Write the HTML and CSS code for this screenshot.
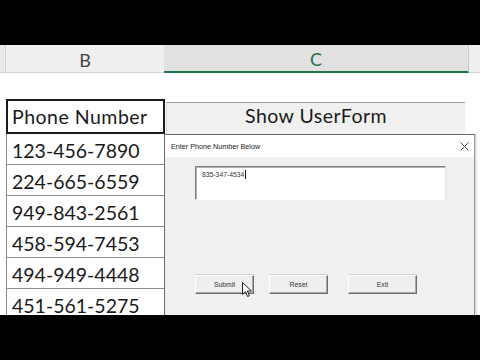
FILE: index.html
```html
<!DOCTYPE html>
<html>
<head>
<meta charset="utf-8">
<link rel="stylesheet" href="styles.css">
</head>
<body>
<div class="topbar"></div>
<div class="colheads">
  <div class="ch corner"></div>
  <div class="ch colb">B</div>
  <div class="ch colc">C</div>
  <div class="ch cold"></div>
</div>
<div class="sheet">
  <div class="cells">
    <div class="table">
      <div class="hcell">Phone Number</div>
      <div class="cell">123-456-7890</div>
      <div class="cell">224-665-6559</div>
      <div class="cell">949-843-2561</div>
      <div class="cell active">458-594-7453</div>
      <div class="cell">494-949-4448</div>
      <div class="cell">451-561-5275</div>
    </div>
    <div class="showbtn">Show UserForm</div>
  </div>
  <div class="dialog">
    <div class="titlebar">
      <span class="title">Enter Phone Number Below</span>
      <svg class="close" width="9" height="9" viewBox="0 0 9 9"><path d="M0.5 0.5 L8.5 8.5 M8.5 0.5 L0.5 8.5" stroke="#444" stroke-width="1" fill="none"/></svg>
    </div>
    <div class="dbody">
      <div class="textbox"><span class="tbtext">835-347-4534</span><span class="caret"></span></div>
      <div class="buttons">
        <div class="btn submit">Submit</div>
        <div class="btn reset">Reset</div>
        <div class="btn exit">Exit</div>
      </div>
      <svg class="cursor" width="11" height="16" viewBox="0 0 11 16"><path d="M0.5 0.5 L0.5 12.5 L3.5 9.7 L5.6 14.5 L7.4 13.7 L5.4 9 L9.5 9 Z" fill="#fff" stroke="#222" stroke-width="1" stroke-linejoin="round"/></svg>
    </div>
  </div>
</div>
<div class="bottombar"></div>
</body>
</html>
```

FILE: styles.css
```css
html, body {
  margin: 0;
  padding: 0;
}
body {
  width: 480px;
  height: 360px;
  overflow: hidden;
  background: #ffffff;
  font-family: Lato, "Open Sans", sans-serif;
}
.topbar, .bottombar {
  height: 45px;
  background: #000000;
}
.colheads {
  display: flex;
  height: 28px;
}
.ch {
  box-sizing: border-box;
  height: 28px;
  border-bottom: 1px solid #d4d4d4;
  display: flex;
  align-items: center;
  justify-content: center;
  font-size: 18px;
  color: #444444;
  padding-top: 2px;
}
.corner {
  width: 6px;
  background: #e9e9e9;
  border-right: 1px solid #cfcfcf;
}
.colb {
  width: 158px;
  background: #efefef;
}
.colc {
  width: 305px;
  background: #e1e1e1;
  color: #217346;
  border-bottom: 2px solid #217346;
  border-right: 1px solid #cacaca;
}
.cold {
  flex: 1;
  background: #efefef;
}
.sheet {
  position: relative;
  height: 242px;
  overflow: hidden;
}
.cells {
  display: flex;
  align-items: flex-start;
  gap: 1px;
  padding: 26px 0 0 6px;
}
.table {
  width: 159px;
  font-size: 19.5px;
  color: #1a1a1a;
}
.hcell {
  box-sizing: border-box;
  height: 35px;
  border: 2px solid #1a1a1a;
  padding-left: 4px;
  line-height: 31px;
  white-space: nowrap;
  letter-spacing: 0.5px;
}
.cell {
  box-sizing: border-box;
  height: 31px;
  border-left: 1px solid #8c8c8c;
  border-right: 1px solid #8c8c8c;
  border-bottom: 1px solid #8c8c8c;
  padding-left: 5px;
  line-height: 33px;
  white-space: nowrap;
}
.cell.active {
  border-right-color: #217346;
}
.showbtn {
  box-sizing: border-box;
  margin-top: 3px;
  width: 299px;
  height: 33px;
  background: #f0f0f0;
  border-top: 1px solid #9e9e9e;
  border-left: 1px solid #d6d6d6;
  font-size: 19.5px;
  color: #1a1a1a;
  text-align: center;
  line-height: 25px;
  letter-spacing: 0.45px;
}
.dialog {
  position: absolute;
  left: 164px;
  top: 61px;
  width: 311px;
  height: 200px;
  box-sizing: border-box;
  border: 1px solid #6a6a6a;
  border-right-color: #9a9a9a;
  box-shadow: 1px 0 0 #d8d8d8, 2px 0 0 #e8e8e8;
  background: #f0f0f0;
  font-family: "Liberation Sans", Arial, sans-serif;
  color: #222222;
}
.titlebar {
  height: 22px;
  background: #ffffff;
  display: flex;
  align-items: center;
  justify-content: space-between;
  padding: 0 5px 0 6px;
}
.title {
  font-size: 7.2px;
  color: #222222;
}
.close {
  display: block;
}
.dbody {
  position: relative;
  padding: 9px 0 0 30px;
}
.textbox {
  box-sizing: border-box;
  width: 251px;
  height: 34px;
  background: #ffffff;
  border-top: 1px solid #7d7d7d;
  border-left: 1px solid #7d7d7d;
  border-right: 1px solid #e3e3e3;
  border-bottom: 1px solid #ffffff;
  box-shadow: inset 1px 1px 0 #b4b4b4;
  padding: 3px 0 0 6px;
  font-size: 6.8px;
  color: #333333;
  display: flex;
  align-items: flex-start;
}
.tbtext {
  line-height: 9px;
}
.caret {
  display: inline-block;
  width: 1px;
  height: 9px;
  background: #111111;
  margin-left: 0.5px;
}
.buttons {
  display: flex;
  margin-top: 75px;
}
.btn {
  box-sizing: border-box;
  height: 19px;
  background: #efefef;
  border-top: 1px solid #ffffff;
  border-left: 1px solid #ffffff;
  border-right: 1px solid #6e6e6e;
  border-bottom: 1px solid #6e6e6e;
  box-shadow: inset -1px -1px 0 #a8a8a8, 0 -1px 0 #d0d0d0;
  font-size: 6.8px;
  color: #333333;
  text-align: center;
  line-height: 17px;
}
.submit {
  width: 59px;
}
.reset {
  width: 59px;
  margin-left: 15px;
}
.exit {
  width: 69px;
  margin-left: 20px;
}
.cursor {
  position: absolute;
  left: 77px;
  top: 125px;
}
```
